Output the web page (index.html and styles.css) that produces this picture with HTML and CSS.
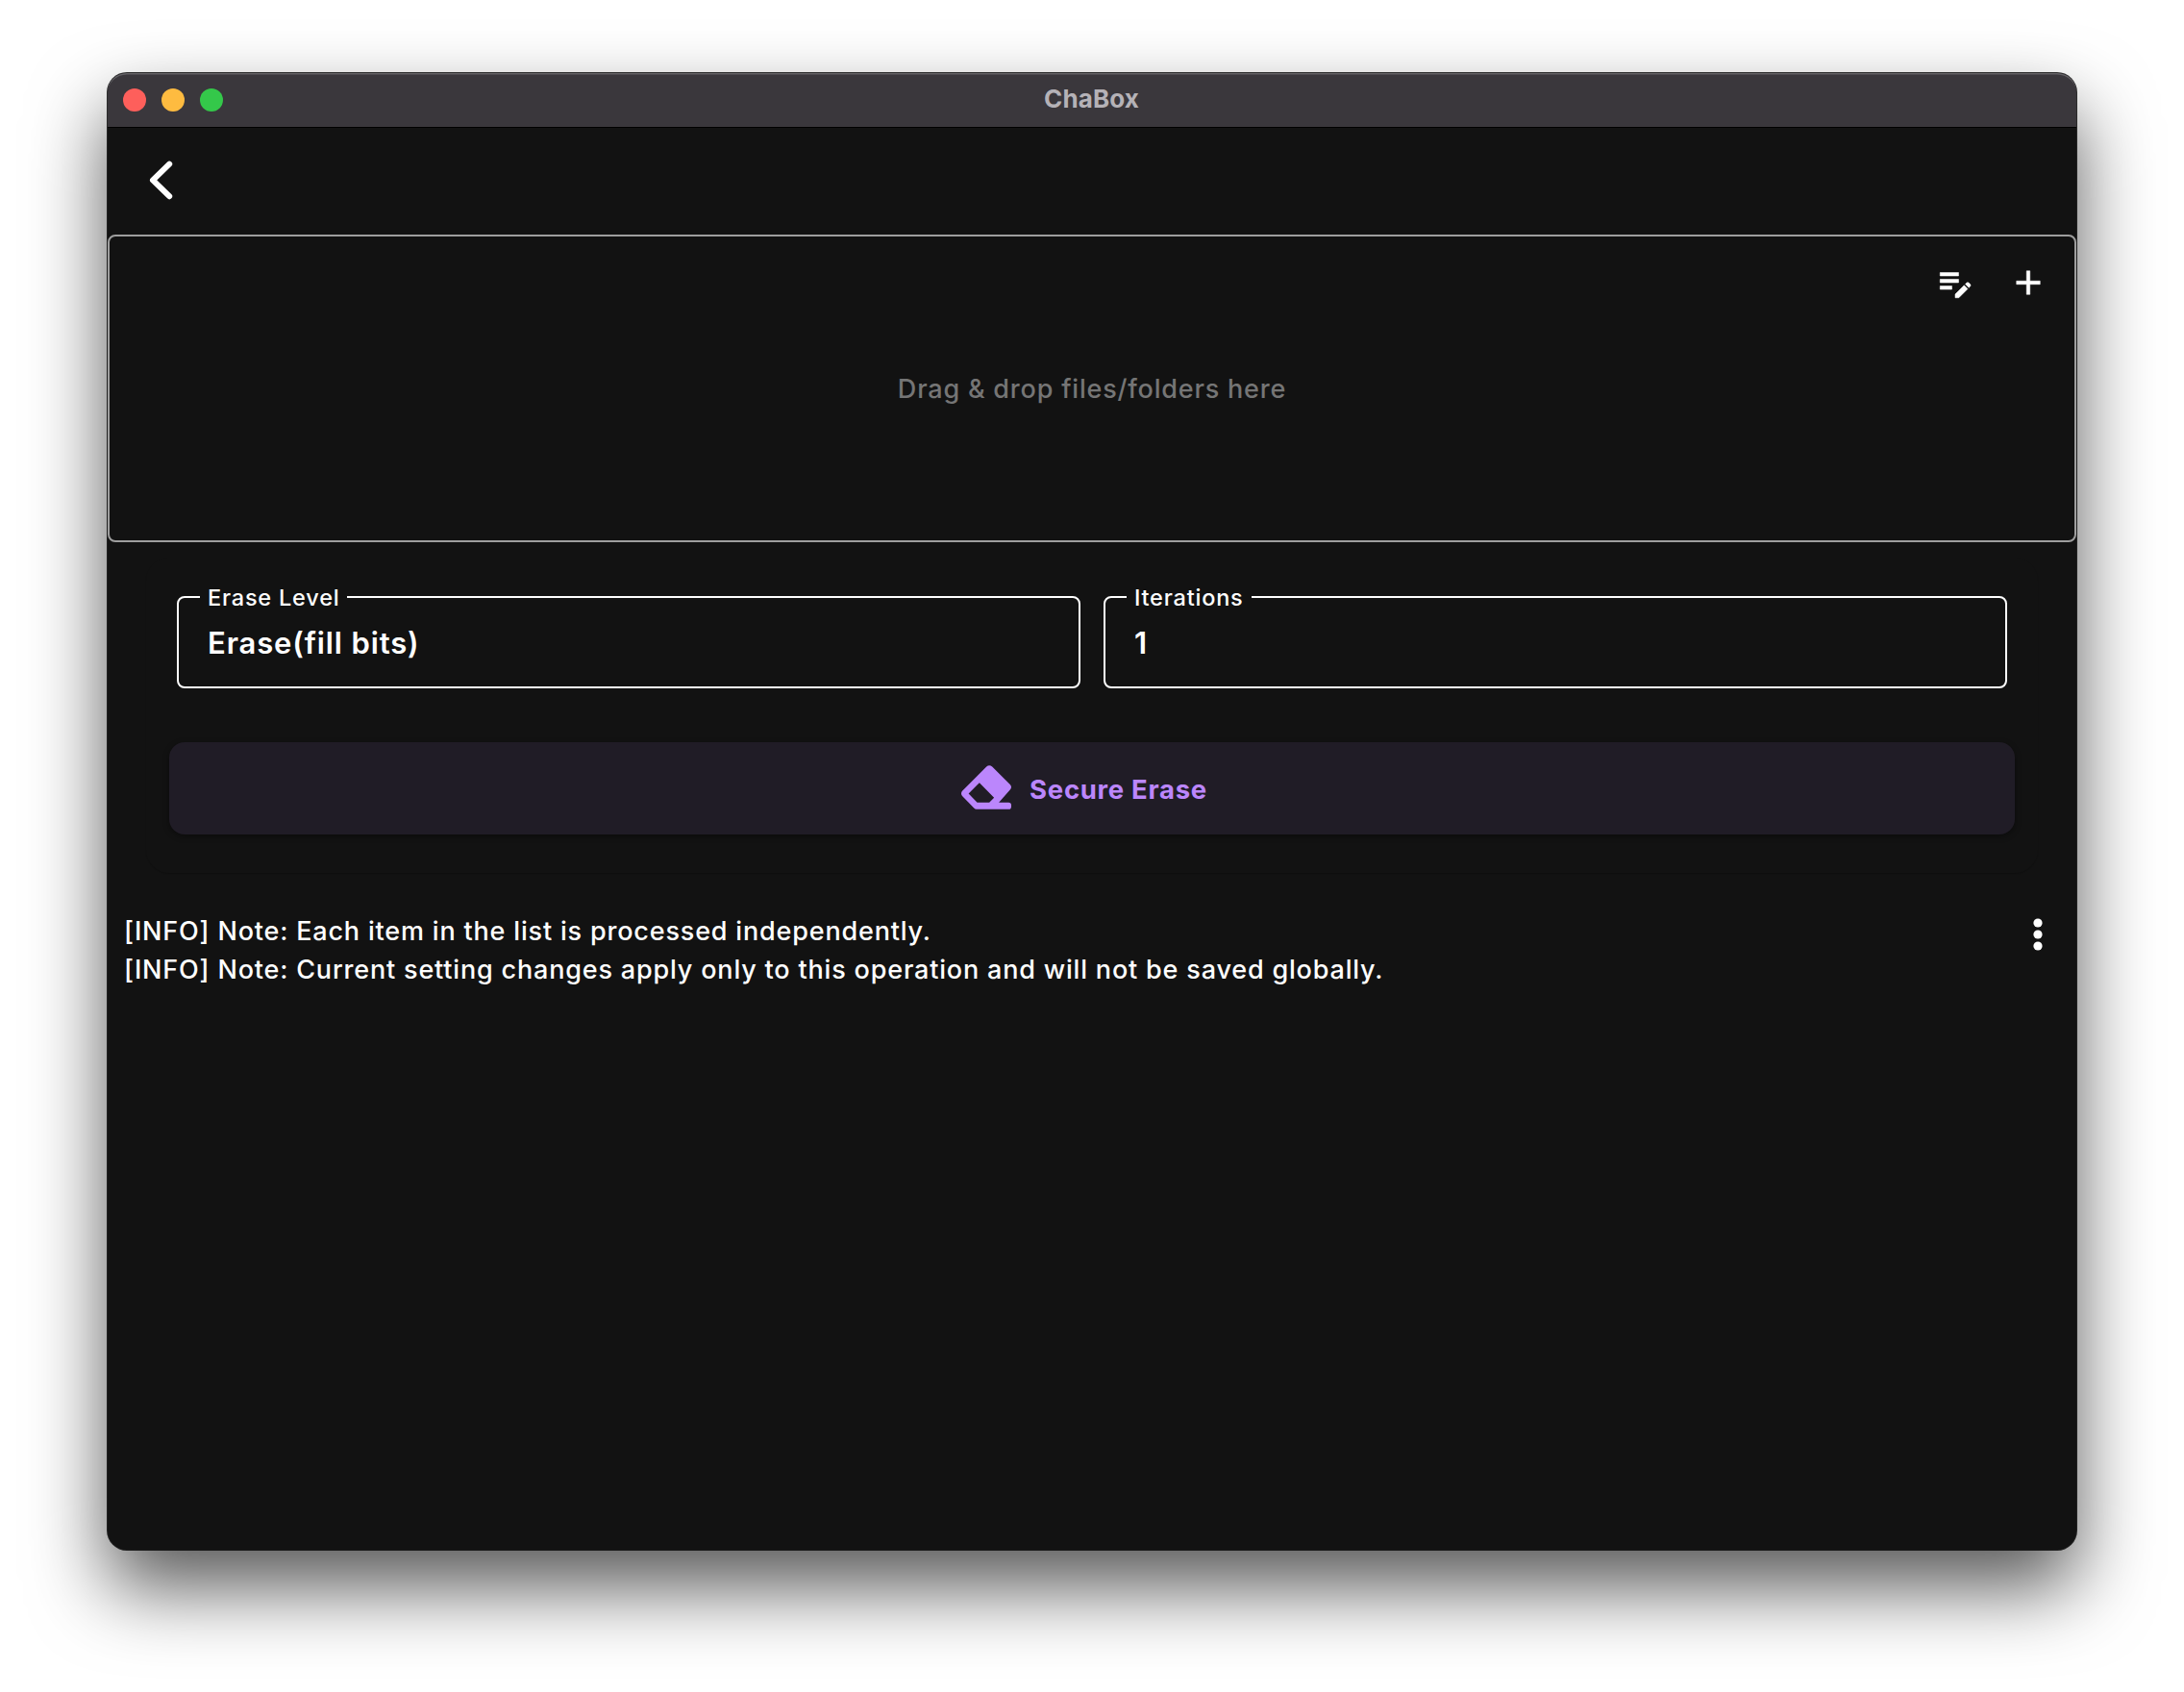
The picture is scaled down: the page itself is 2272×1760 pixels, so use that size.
FILE: index.html
```html
<!DOCTYPE html>
<html lang="en">
<head>
<meta charset="utf-8">
<title>ChaBox</title>
<link rel="stylesheet" href="styles.css">
</head>
<body>
<div class="window">
  <header class="titlebar">
    <div class="lights"><i class="light close"></i><i class="light minimize"></i><i class="light expand"></i></div>
    <div class="title"><span>ChaBox</span></div>
  </header>
  <nav class="toolbar">
    <svg class="back" viewBox="0 0 48 48"><path d="M32.2 7.6 15 24.4l17.2 16.8"/></svg>
  </nav>
  <section class="dropzone">
    <div class="drop-actions">
      <svg viewBox="0 0 24 24"><path d="M3 10h11v2H3v-2zm0-2h11V6H3v2zm0 8h7v-2H3v2zm15.01-3.13.71-.71c.39-.39 1.02-.39 1.41 0l.71.71c.39.39.39 1.02 0 1.41l-.71.71-2.12-2.12zm-.71.71-5.3 5.3V21h2.12l5.3-5.3-2.12-2.12z"/></svg>
      <svg viewBox="0 0 24 24"><path d="M19 13h-6v6h-2v-6H5v-2h6V5h2v6h6v2z"/></svg>
    </div>
    <p class="hint"><span>Drag &amp; drop files/folders here</span></p>
  </section>
  <section class="card">
    <div class="fields">
      <fieldset class="field"><legend class="legend-level"><span>Erase Level</span></legend><div class="value"><span>Erase(fill bits)</span></div></fieldset>
      <fieldset class="field"><legend class="legend-iter"><span>Iterations</span></legend><div class="value"><span>1</span></div></fieldset>
    </div>
    <button class="erase">
      <svg viewBox="0 0 512 512"><path fill-rule="evenodd" d="M258 44Q287 20 317 44L502 228Q522 252 502 278L385 412H484Q512 412 512 440V452Q512 480 484 480H155Q142 480 130 468L10 345Q-10 319 10 293ZM186 209L75 319 163 412H287L336 361Z"/></svg>
      <span>Secure Erase</span>
    </button>
  </section>
  <section class="log">
    <div class="lines">
      <p><span>[INFO] Note: Each item in the list is processed independently.</span></p>
      <p><span>[INFO] Note: Current setting changes apply only to this operation and will not be saved globally.</span></p>
    </div>
    <svg class="more" viewBox="0 0 12 36"><circle cx="6" cy="6" r="4.6"/><circle cx="6" cy="18" r="4.6"/><circle cx="6" cy="30" r="4.6"/></svg>
  </section>
</div>
</body>
</html>
```
FILE: styles.css
```css
* { box-sizing: border-box; }
body {
  margin: 0;
  height: 1760px;
  padding: 76px 112px 148px;
  overflow: hidden;
  background: #fff;
  color: #fff;
  font-family: Inter, "Liberation Sans", sans-serif;
}
p { margin: 0; }
svg { display: block; fill: currentColor; }
.window {
  display: flex;
  flex-direction: column;
  height: 1536px;
  border-radius: 20px;
  background: #121212;
  box-shadow: 0 0 0 1px rgba(0, 0, 0, .8), 0 39px 80px rgba(0, 0, 0, .66);
}
.titlebar {
  display: grid;
  grid-template-columns: 1fr auto 1fr;
  align-items: center;
  height: 57px;
  padding: 0 17px 0 16px;
  border-radius: 20px 20px 0 0;
  border-bottom: 1px solid #000;
  background: #3a373c;
  box-shadow: inset 0 2px 0 -0.5px #626064;
}
.lights { display: flex; gap: 16px; }
.light { width: 24px; height: 24px; border-radius: 50%; }
.close { background: #fe5f5b; }
.minimize { background: #febb40; }
.expand { background: #34c84a; }
.title { padding-bottom: 2px; color: #b5b2b7; font-size: 26px; font-weight: 700; line-height: 32px; letter-spacing: .1px; }
.toolbar { height: 111px; padding: 30px 32px; }
.back { width: 48px; height: 48px; fill: none; stroke: #fff; stroke-width: 6; stroke-linecap: round; stroke-linejoin: round; }
.dropzone {
  height: 320px;
  border: 2px solid #9e9e9e;
  border-radius: 8px;
}
.drop-actions { display: flex; justify-content: flex-end; gap: 34px; padding: 27px 27px 0; }
.drop-actions svg { width: 42px; height: 42px; stroke: currentColor; stroke-width: .3; }
.hint { margin-top: 70px; text-align: center; color: #757575; font-size: 27px; font-weight: 450; line-height: 40px; letter-spacing: .8px; }
.card {
  height: 328px;
  margin: 16px 40px 0;
  padding: 0 24px;
  border-radius: 24px;
  box-shadow: 0 1px 1px rgba(0, 0, 0, .2);
}
.fields { display: grid; grid-template-columns: 1fr 1fr; gap: 24px; padding: 28px 8px 0; }
.field {
  height: 108px;
  min-width: 0;
  margin: 0;
  padding: 0 30px 0 22px;
  border: 2px solid #fff;
  border-radius: 8px;
}
.field legend { height: 26px; padding: 1px 8px 0; font-size: 23.5px; font-weight: 450; line-height: 26px; letter-spacing: .8px; white-space: nowrap; }
.legend-level { width: 153px; }
.legend-iter { width: 130px; }
.value { padding: 13px 8px 0; font-size: 31px; font-weight: 600; line-height: 44px; letter-spacing: .87px; }
.erase {
  display: flex;
  align-items: center;
  justify-content: center;
  gap: 19px;
  width: 100%;
  height: 96px;
  margin: 56px 0 0;
  padding: 1px 16px 0 0;
  border: 0;
  border-radius: 16px;
  background: #201c26;
  color: #bb86fc;
  font: 700 27.5px/40px Inter, "Liberation Sans", sans-serif;
  letter-spacing: .7px;
  box-shadow: 0 2px 6px rgba(0, 0, 0, .4);
}
.erase svg { width: 52px; height: 52px; margin-top: -4px; }
.log { display: flex; justify-content: space-between; padding: 41px 34px 0 17px; }
.lines { font-size: 27px; font-weight: 450; line-height: 40px; letter-spacing: .82px; }
.more { width: 12px; height: 36px; margin-top: 5px; }
```
